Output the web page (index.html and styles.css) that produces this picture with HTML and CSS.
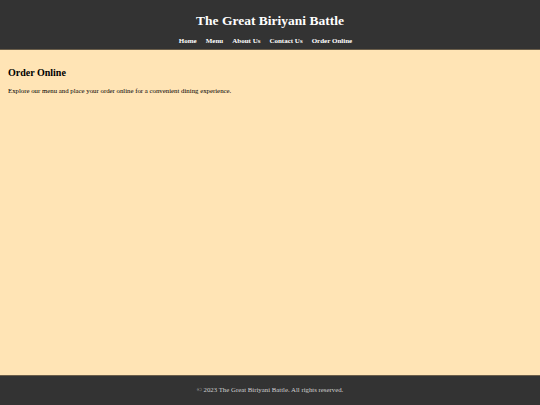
FILE: index.html
```html
<!DOCTYPE html>
<html>
<head>
<meta charset="utf-8">
<link rel="stylesheet" href="styles.css">
</head>
<body>
<header class="site-header">
  <h1 class="site-title">The Great Biriyani Battle</h1>
  <nav class="site-nav">
    <a href="#">Home</a>
    <a href="#">Menu</a>
    <a href="#">About Us</a>
    <a href="#">Contact Us</a>
    <a href="#">Order Online</a>
  </nav>
</header>
<main class="content">
  <h2 class="section-title">Order Online</h2>
  <p class="section-text">Explore our menu and place your order online for a convenient dining experience.</p>
</main>
<footer class="site-footer">
  <p>&copy; 2023 The Great Biriyani Battle. All rights reserved.</p>
</footer>
</body>
</html>
```
FILE: styles.css
```css
html, body {
  margin: 0;
  padding: 0;
  height: 100%;
}
body {
  font-family: "Liberation Serif", "Times New Roman", serif;
  background: #ffe4b5;
  display: flex;
  flex-direction: column;
  min-height: 405px;
}
.site-header {
  background: #333333;
  color: #ffffff;
  text-align: center;
  padding: 12px 0 3px;
  border-bottom: 1px solid #6b5e4a;
}
.site-title {
  margin: 0;
  font-size: 13.5px;
  font-weight: bold;
  line-height: 18px;
}
.site-nav {
  display: flex;
  justify-content: center;
  margin-top: 7px;
}
.site-nav a {
  color: #ffffff;
  text-decoration: none;
  font-weight: bold;
  font-size: 7px;
  line-height: 9px;
  margin-right: 9px;
}
.content {
  flex: 1;
  padding: 16px 8px;
}
.section-title {
  margin: 0;
  font-size: 10px;
  line-height: 14px;
}
.section-text {
  margin: 7px 0 0;
  font-size: 6.8px;
  line-height: 8px;
}
.site-footer {
  background: #333333;
  color: #d0d0d0;
  text-align: center;
  border-top: 1px solid #6b5e4a;
  padding: 10px 0 11px;
}
.site-footer p {
  margin: 0;
  font-size: 6.8px;
  line-height: 8px;
}
```
